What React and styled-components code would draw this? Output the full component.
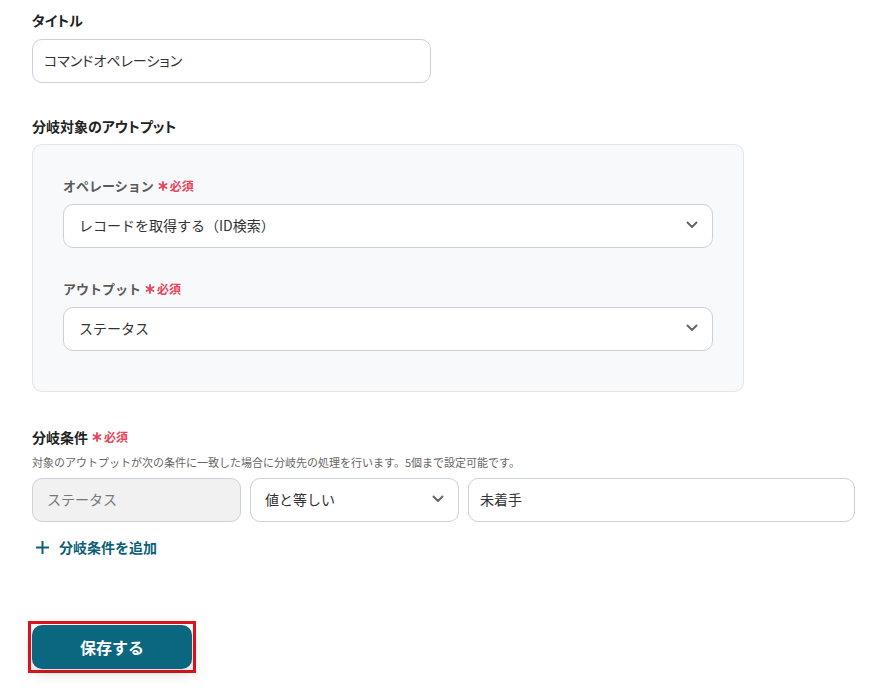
import React from "react";
import styled, { createGlobalStyle } from "styled-components";

const Global = createGlobalStyle`
  html, body { margin: 0; padding: 0; background: #fff; }
  body { font-family: "Noto Sans CJK JP", "Noto Sans", sans-serif; color: #222; }
  * { box-sizing: border-box; }
`;

const Page = styled.div`
  padding: 10px 32px 20px 32px;
  display: flex;
  flex-direction: column;
`;

const Label = styled.div`
  font-size: ${(p) => (p.$muted ? 13 : 14)}px;
  line-height: 20px;
  font-weight: 700;
  font-feature-settings: ${(p) => (p.$muted ? "normal" : '"palt"')};
  color: ${(p) => (p.$muted ? "#5a5a5a" : "#222")};
  margin-top: ${(p) => p.$top || 0}px;
  display: flex;
  align-items: center;
  gap: 4px;
`;

const Required = styled.span`
  color: #e8445a;
  font-size: 12px;
  font-weight: 700;
  font-feature-settings: normal;
  display: inline-flex;
  align-items: center;
  gap: 2px;
`;

const TextBox = styled.div`
  width: ${(p) => p.$w}px;
  height: 44px;
  margin-top: ${(p) => p.$top || 0}px;
  border: 1px solid #ccd0d8;
  border-radius: 10px;
  background: ${(p) => (p.$disabled ? "#f1f1f1" : "#fff")};
  display: flex;
  align-items: center;
  justify-content: space-between;
  padding: 0 14px 2px ${(p) => (p.$pad ? p.$pad : 11)}px;
  font-size: 14px;
  font-feature-settings: ${(p) => (p.$palt ? '"palt"' : "normal")};
  color: ${(p) => (p.$disabled ? "#777" : "#333")};
  flex-shrink: 0;
`;

const Panel = styled.div`
  width: 712px;
  margin-top: 8px;
  background: #f8f9fa;
  border: 1px solid #e3e5e8;
  border-radius: 10px;
  padding: 31px 30px 40px 30px;
  display: flex;
  flex-direction: column;
`;

const Desc = styled.div`
  font-size: 11px;
  line-height: 16px;
  color: #666;
  margin-top: 7px;
`;

const Row = styled.div`
  display: flex;
  gap: 9px;
  margin-top: 8px;
`;

const AddLink = styled.div`
  margin-top: 15px;
  display: flex;
  align-items: center;
  gap: 10px;
  padding-left: 4px;
  color: #0d5f77;
  font-size: 14px;
  line-height: 20px;
  font-weight: 700;
`;

const Highlight = styled.div`
  align-self: flex-start;
  margin-top: 64px;
  margin-left: -4px;
  border: 3px solid #e3131c;
  padding: 1px;
`;

const SaveButton = styled.button`
  width: 160px;
  height: 44px;
  border: none;
  border-radius: 10px;
  background: #0b6680;
  color: #fff;
  font-family: inherit;
  font-size: 16px;
  font-weight: 700;
  padding-bottom: 2px;
  box-shadow: 0 4px 14px rgba(0, 0, 0, 0.18);
  display: block;
`;

const Chevron = () => (
  <svg width="12" height="8" viewBox="0 0 12 8" fill="none">
    <path d="M1.5 1.5L6 6L10.5 1.5" stroke="#666" strokeWidth="2" strokeLinecap="round" strokeLinejoin="round" />
  </svg>
);

const Star = () => (
  <svg width="10" height="10" viewBox="0 0 10 10">
    <g stroke="#e8445a" strokeWidth="1.8" strokeLinecap="round">
      <line x1="5" y1="1" x2="5" y2="9" />
      <line x1="1.5" y1="3" x2="8.5" y2="7" />
      <line x1="1.5" y1="7" x2="8.5" y2="3" />
    </g>
  </svg>
);

const Req = () => (
  <Required>
    <Star />
    必須
  </Required>
);

const Plus = () => (
  <svg width="13" height="13" viewBox="0 0 13 13">
    <g stroke="#0d5f77" strokeWidth="2" strokeLinecap="square">
      <line x1="6.5" y1="1" x2="6.5" y2="12" />
      <line x1="1" y1="6.5" x2="12" y2="6.5" />
    </g>
  </svg>
);

export default function App() {
  return (
    <>
      <Global />
      <Page>
        <Label>タイトル</Label>
        <TextBox $w={399} $top={9} $palt>コマンドオペレーション</TextBox>

        <Label $top={33}>分岐対象のアウトプット</Label>
        <Panel>
          <Label $muted>
            オペレーション <Req />
          </Label>
          <TextBox $w={650} $top={8} $pad={15}>
            レコードを取得する（ID検索）
            <Chevron />
          </TextBox>
          <Label $muted $top={31}>
            アウトプット <Req />
          </Label>
          <TextBox $w={650} $top={8} $pad={15}>
            ステータス
            <Chevron />
          </TextBox>
        </Panel>

        <Label $top={35}>
          分岐条件 <Req />
        </Label>
        <Desc>対象のアウトプットが次の条件に一致した場合に分岐先の処理を行います。5個まで設定可能です。</Desc>
        <Row>
          <TextBox $w={209} $disabled $pad={14}>ステータス</TextBox>
          <TextBox $w={209} $pad={14}>
            値と等しい
            <Chevron />
          </TextBox>
          <TextBox $w={387} $pad={11}>未着手</TextBox>
        </Row>
        <AddLink>
          <Plus />
          分岐条件を追加
        </AddLink>

        <Highlight>
          <SaveButton>保存する</SaveButton>
        </Highlight>
      </Page>
    </>
  );
}
